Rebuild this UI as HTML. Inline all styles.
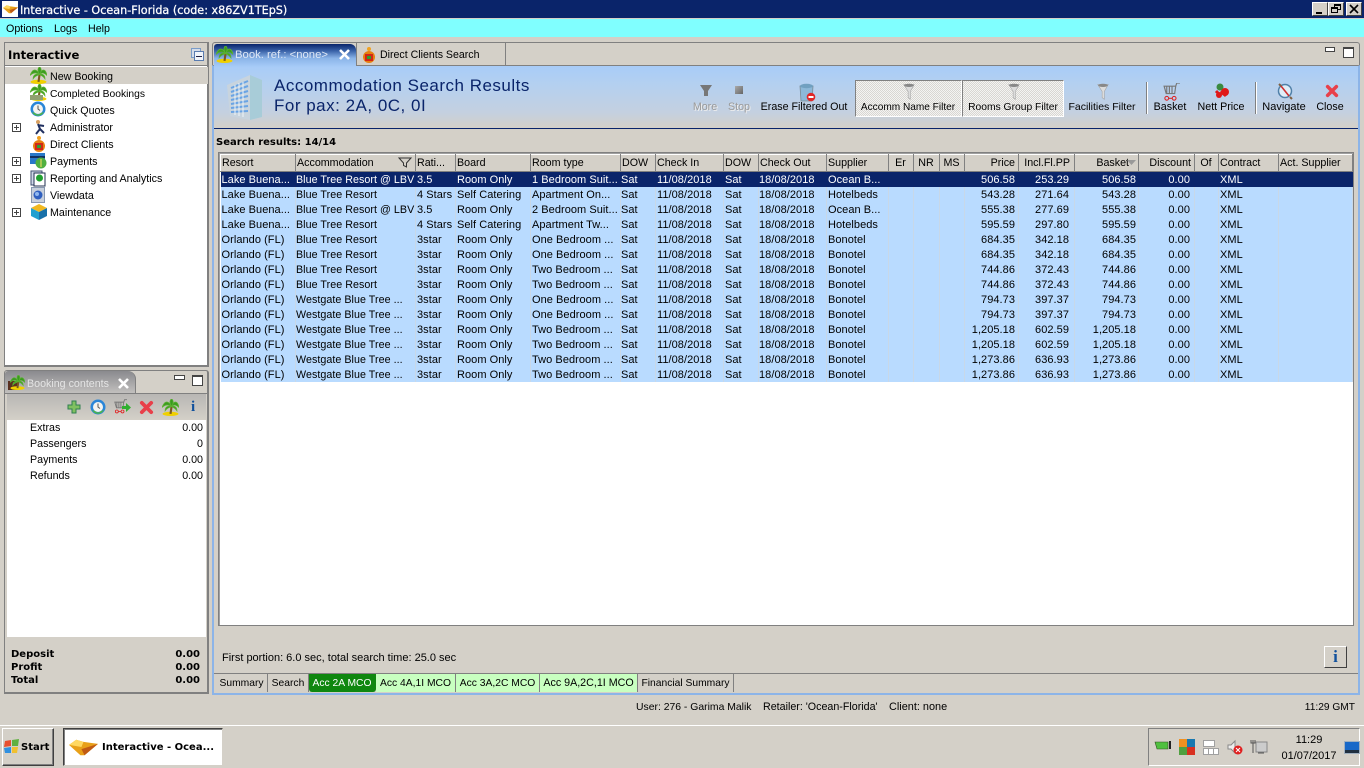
<!DOCTYPE html>
<html><head><meta charset="utf-8"><style>
*{box-sizing:border-box}
html,body{margin:0;padding:0;width:1364px;height:768px;overflow:hidden;background:#d4d0c8;font:10.7px/13px "Liberation Sans",sans-serif;color:#000}
.a{position:absolute}
.t{position:absolute;white-space:nowrap;margin-top:1px}
.c{transform:translateX(-50%)}
.b{font-family:"DejaVu Sans",sans-serif;font-weight:bold;font-size:10px}
svg{position:absolute;overflow:visible}
table{position:absolute;left:220px;top:154px;width:1132px;border-collapse:collapse;table-layout:fixed;font-size:11px}
th{height:17px;padding:1px 2px 0 1px;font-weight:normal;text-align:left;background:#d4d0c8;border:1px solid;border-color:#fff #808080 #808080 #fff;white-space:nowrap;overflow:hidden;font-size:10.7px}
td{height:15px;padding:2px 2px 0 1px;vertical-align:top;background:#b9dbff;border-right:1px solid #c8d8e8;white-space:nowrap;overflow:hidden;letter-spacing:.05px}
tr.s td{background:#0a246a;color:#fff;border-right-color:#0a246a}
td:nth-child(2),td:nth-child(6),td:nth-child(9){padding-left:0}
td:nth-child(2){padding-right:0;font-size:10.700px}
th:nth-child(n+14):nth-child(-n+17),td:nth-child(n+14):nth-child(-n+17){text-align:right}
td:nth-child(14){padding-right:3px}
td:nth-child(15){padding-right:5px}
td:nth-child(16){padding-right:2px}
td:nth-child(17){padding-right:4px}
th:nth-child(14),th:nth-child(17){padding-right:3px}
th:nth-child(15){padding-right:4px}
.tab{position:absolute;top:674px;height:18px;border-right:1px solid #808080;text-align:center;line-height:15px;padding-top:2px;white-space:nowrap;font-size:10.3px}
.g{background:#c8ffc0}
.sep{position:absolute;top:82px;width:2px;height:32px;border-left:1px solid #808080;border-right:1px solid #fff}
.pr{position:absolute;top:80px;height:37px;border:1px solid;border-color:#808080 #fff #fff #808080;background:repeating-conic-gradient(#d8d6d2 0 25%,#f4f4f2 0 50%) 0 0/2px 2px}
</style></head><body>
<svg width="0" height="0" style="position:absolute"><defs>
<symbol id="palm" viewBox="0 0 16 16"><ellipse cx="8" cy="14" rx="7.500" ry="2" fill="#f0d000"/><path d="M8 14 L9 7" stroke="#7a5a20" stroke-width="2"/><path d="M9 7 C5 0 2 3 0 8 C3 5 6 5 9 7 C5 6 3 8 3 11 C5 8 7 8 9 7 C7 4 7 1 9 0 C11 1 11 4 9 7 C12 0 15 3 16 8 C13 5 11 5 9 7 C12 6 14 8 14 11 C12 8 11 8 9 7" fill="#3a9a20" stroke="#5ab030" stroke-width=".8"/></symbol>
<symbol id="funnel" viewBox="0 0 16 20"><path d="M2 2 H14 L9.500 10 V19 L7 17 V10 Z" fill="#dcdcdc" stroke="#a0a0a0" stroke-width=".6"/><ellipse cx="8" cy="3" rx="5.500" ry="1.800" fill="#888"/></symbol>
<symbol id="x" viewBox="0 0 16 16"><path d="M3 3 L13 13 M13 3 L3 13" stroke="#e8404a" stroke-width="4" stroke-linecap="round"/></symbol>
<symbol id="cart" viewBox="0 0 16 18"><path d="M1 3 H12 L11 10 H3 Z M3.500 3 V10 M6 3 V10 M8.500 3 V10 M12 3 L13 0 H16" fill="none" stroke="#777" stroke-width="1.100"/><circle cx="3.500" cy="14.500" r="1.800" fill="none" stroke="#e02020"/><circle cx="10.500" cy="14.500" r="1.800" fill="none" stroke="#e02020"/><path d="M5 14.500 H9" stroke="#e02020"/></symbol>
<symbol id="clock" viewBox="0 0 16 16"><circle cx="8" cy="8" r="7.500" fill="#2a86d8"/><circle cx="8" cy="8" r="5" fill="#f4f4f0"/><path d="M8 4.500 V8 L10 9.500" stroke="#555" fill="none"/><path d="M2 11 C5 16 11 16 14 11 L11 12 C9 14 7 14 5 12 Z" fill="#50b840"/></symbol>
<symbol id="logo" viewBox="0 0 28 16"><path d="M0 6 L7 1 L14 3 L28 5 L15 16 L11 16 Z" fill="#e8a018"/><path d="M0 6 L7 1 L14 3 L12 8 Z" fill="#ffd860"/><path d="M28 5 L15 16 L12 10 Z" fill="#c05a14"/></symbol>
</defs></svg>

<!-- title bar -->
<div class="a" style="left:0;top:0;width:1364px;height:18px;background:#0a246a"></div>
<div class="a" style="left:2px;top:1px;width:16px;height:16px;background:#fff"></div>
<svg style="left:3px;top:4px" width="15" height="10"><use href="#logo" width="15" height="10"/></svg>
<div class="t b" style="left:20px;top:3px;color:#fff;font-size:11.200px;font-weight:normal;-webkit-text-stroke:.25px #fff">Interactive - Ocean-Florida (code: x86ZV1TEpS)</div>
<div class="a" style="left:1312px;top:2px;width:16px;height:14px;background:#d4d0c8;border:1px solid;border-color:#fff #404040 #404040 #fff"><div class="a" style="left:3px;top:9px;width:6px;height:2px;background:#000"></div></div>
<div class="a" style="left:1328px;top:2px;width:16px;height:14px;background:#d4d0c8;border:1px solid;border-color:#fff #404040 #404040 #fff"><div class="a" style="left:5px;top:1px;width:7px;height:6px;border:1px solid #000;border-top-width:2px"></div><div class="a" style="left:2px;top:4px;width:7px;height:6px;border:1px solid #000;border-top-width:2px;background:#d4d0c8"></div></div>
<div class="a" style="left:1346px;top:2px;width:16px;height:14px;background:#d4d0c8;border:1px solid;border-color:#fff #404040 #404040 #fff"><svg style="left:3px;top:2px" width="8" height="8"><path d="M0 0 L8 8 M8 0 L0 8" stroke="#000" stroke-width="1.600"/></svg></div>
<!-- menu -->
<div class="a" style="left:0;top:18px;width:1364px;height:1px;background:#d4d0c8"></div>
<div class="a" style="left:0;top:19px;width:1364px;height:18px;background:#80ffff"></div>
<div class="t" style="left:6px;top:22px">Options</div><div class="t" style="left:54px;top:22px">Logs</div><div class="t" style="left:88px;top:22px">Help</div>

<!-- left nav -->
<div class="a" style="left:4px;top:42px;width:205px;height:325px;border:1px solid #808080;border-width:1px 2px 2px 1px;background:#fff"></div>
<div class="a" style="left:5px;top:43px;width:202px;height:23px;background:#d4d0c8;border-bottom:1px solid #808080"></div>
<div class="t b" style="left:8px;top:47px;font-size:11.600px;line-height:14px">Interactive</div>
<div class="a" style="left:191px;top:48px;width:10px;height:10px;border:1px solid #7a9cc8;background:#d4dce8"></div>
<div class="a" style="left:194px;top:51px;width:10px;height:10px;border:1px solid #5a7cb0;background:#f0f4fa"><div class="a" style="left:1px;top:4px;width:6px;height:1px;background:#224"></div></div>
<div class="a" style="left:5px;top:67px;width:203px;height:17px;background:#d4d0c8"></div>
<svg style="left:30px;top:67px" width="17" height="17"><use href="#palm" width="17" height="17"/></svg>
<svg style="left:30px;top:84px" width="17" height="17"><use href="#palm" width="17" height="17"/><rect x="0" y="11" width="13" height="5" fill="#90a070"/></svg>
<svg style="left:30px;top:101px" width="16" height="16"><use href="#clock" width="16" height="16"/></svg>
<svg style="left:32px;top:119px" width="15" height="16"><circle cx="6" cy="3" r="2" fill="#d8a060"/><path d="M6 5 L8 10 L4 15 M8 10 L12 14 M6 6 L12 7" stroke="#203060" stroke-width="2" fill="none"/></svg>
<svg style="left:31px;top:135px" width="16" height="17"><circle cx="8" cy="11" r="6" fill="#e88010"/><rect x="4" y="8" width="8" height="7" fill="#d02818"/><rect x="6" y="10" width="4" height="3" fill="#30a030"/><circle cx="8" cy="3" r="2" fill="#f0a020"/></svg>
<svg style="left:30px;top:153px" width="17" height="17"><rect x="0" y="0" width="15" height="11" fill="#2878c8"/><rect x="0" y="3" width="15" height="2" fill="#103060"/><circle cx="11" cy="10" r="5.500" fill="#50b040"/><path d="M11 6 V14" stroke="#ffe060"/></svg>
<svg style="left:31px;top:170px" width="15" height="17"><rect x="0" y="1" width="11" height="14" fill="#d0d8e8" stroke="#405070"/><rect x="3" y="3" width="11" height="13" fill="#fff" stroke="#203050"/><circle cx="8.500" cy="8" r="3.500" fill="#20a030"/></svg>
<svg style="left:31px;top:187px" width="14" height="16"><rect x=".5" y=".5" width="13" height="15" fill="#c8d0dc" stroke="#8898b0"/><circle cx="7" cy="8" r="4.500" fill="#3060c0"/><circle cx="6" cy="7" r="2" fill="#90b8f0"/></svg>
<svg style="left:31px;top:204px" width="16" height="16"><path d="M0 4 L8 0 L16 4 L8 8 Z" fill="#f0b820"/><path d="M0 4 L8 8 V16 L0 12 Z" fill="#20a0d0"/><path d="M16 4 L8 8 V16 L16 12 Z" fill="#1870a8"/></svg>
<div class="t" style="left:50px;top:70px">New Booking</div>
<div class="t" style="left:50px;top:87px;font-size:10.300px">Completed Bookings</div>
<div class="t" style="left:50px;top:104px">Quick Quotes</div>
<div class="t" style="left:50px;top:121px">Administrator</div>
<div class="t" style="left:50px;top:138px">Direct Clients</div>
<div class="t" style="left:50px;top:155px">Payments</div>
<div class="t" style="left:50px;top:172px">Reporting and Analytics</div>
<div class="t" style="left:50px;top:189px">Viewdata</div>
<div class="t" style="left:50px;top:206px">Maintenance</div>
<svg style="left:12px;top:123px" width="9" height="9"><path d="M.5 .5H8.500V8.500H.5Z M2 4.500H7 M4.500 2V7" fill="#fff" stroke="#444"/></svg>
<svg style="left:12px;top:157px" width="9" height="9"><path d="M.5 .5H8.500V8.500H.5Z M2 4.500H7 M4.500 2V7" fill="#fff" stroke="#444"/></svg>
<svg style="left:12px;top:174px" width="9" height="9"><path d="M.5 .5H8.500V8.500H.5Z M2 4.500H7 M4.500 2V7" fill="#fff" stroke="#444"/></svg>
<svg style="left:12px;top:208px" width="9" height="9"><path d="M.5 .5H8.500V8.500H.5Z M2 4.500H7 M4.500 2V7" fill="#fff" stroke="#444"/></svg>

<!-- booking contents -->
<div class="a" style="left:4px;top:370px;width:205px;height:324px;border:1px solid #808080;border-right-width:2px;border-bottom-width:2px;border-radius:3px 3px 0 0;background:#d4d0c8"></div>
<div class="a" style="left:5px;top:371px;width:131px;height:23px;background:linear-gradient(#8a8a8e,#c4c2c0);border-right:1px solid #808080;border-radius:3px 8px 0 0"></div>
<div class="a" style="left:5px;top:393px;width:202px;height:1px;background:#808080"></div>
<div class="a" style="left:7px;top:394px;width:199px;height:26px;background:linear-gradient(#b8b6b4,#d4d0c8)"></div>
<svg style="left:8px;top:375px" width="18" height="16"><rect x="0" y="6" width="10" height="9" fill="#5a3020"/><use href="#palm" x="2" width="15" height="15"/></svg>
<div class="t" style="left:27px;top:377px;color:#e4e4e4;font-size:10.700px">Booking contents</div>
<svg style="left:118px;top:378px" width="11" height="11"><path d="M1 1 L10 10 M10 1 L1 10" stroke="#fff" stroke-width="2.600"/></svg>
<div class="a" style="left:174px;top:375px;width:11px;height:5px;border:1px solid #444;background:#fff"></div>
<div class="a" style="left:192px;top:375px;width:11px;height:11px;border:1px solid #444;border-top-width:2px;background:#fff"></div>
<svg style="left:67px;top:400px" width="14" height="14"><path d="M5 1H9V5H13V9H9V13H5V9H1V5H5Z" fill="#80c060" stroke="#308050"/></svg>
<svg style="left:90px;top:399px" width="16" height="16"><use href="#clock" width="16" height="16"/></svg>
<svg style="left:114px;top:399px" width="17" height="16"><use href="#cart" width="13" height="16"/><path d="M8 7H12V4L17 8.500L12 13V10H8Z" fill="#30b030"/></svg>
<svg style="left:139px;top:400px" width="15" height="15"><use href="#x" width="15" height="15"/></svg>
<svg style="left:162px;top:399px" width="17" height="17"><use href="#palm" width="17" height="17"/></svg>
<div class="t" style="left:191px;top:399px;color:#10509c;font:bold 15px/15px 'Liberation Serif',serif">i</div>
<div class="a" style="left:7px;top:420px;width:199px;height:217px;background:#fff"></div>
<div class="t" style="left:30px;top:421px">Extras</div><div class="t" style="right:1161px;top:421px">0.00</div>
<div class="t" style="left:30px;top:437px">Passengers</div><div class="t" style="right:1161px;top:437px">0</div>
<div class="t" style="left:30px;top:453px">Payments</div><div class="t" style="right:1161px;top:453px">0.00</div>
<div class="t" style="left:30px;top:469px">Refunds</div><div class="t" style="right:1161px;top:469px">0.00</div>
<div class="t b" style="left:11px;top:647px">Deposit</div><div class="t b" style="right:1164px;top:647px">0.00</div>
<div class="t b" style="left:11px;top:660px">Profit</div><div class="t b" style="right:1164px;top:660px">0.00</div>
<div class="t b" style="left:11px;top:673px">Total</div><div class="t b" style="right:1164px;top:673px">0.00</div>

<!-- main panel -->
<div class="a" style="left:212px;top:42px;width:1148px;height:23px;border:1px solid #808080;border-bottom:0;border-radius:3px 3px 0 0"></div>
<div class="a" style="left:212px;top:65px;width:1148px;height:630px;border:2px solid #8cb4e8;border-top:1px solid #808080"></div>
<div class="a" style="left:214px;top:66px;width:1144px;height:62px;background:linear-gradient(#a8ccf8 0%,#b4d0f0 30%,#c4d0e0 75%,#d4d0c8 100%)"></div>
<div class="a" style="left:214px;top:128px;width:1144px;height:1px;background:#0a246a"></div>
<div class="a" style="left:214px;top:44px;width:142px;height:23px;background:linear-gradient(#0a246a 0%,#3a62a8 30%,#8ab4e8 62%,#a8ccf8 100%);border-radius:3px 6px 0 0"></div>
<div class="a" style="left:356px;top:43px;width:150px;height:23px;border-left:1px solid #808080;border-right:1px solid #808080;border-bottom:1px solid #808080"></div>
<svg style="left:216px;top:46px" width="17" height="17"><use href="#palm" width="17" height="17"/></svg>
<div class="t" style="left:235px;top:48px;color:#dfe8f6;font-size:11.300px">Book. ref.: &lt;none&gt;</div>
<svg style="left:339px;top:49px" width="11" height="11"><path d="M1 1 L10 10 M10 1 L1 10" stroke="#fff" stroke-width="2.600"/></svg>
<svg style="left:361px;top:46px" width="16" height="17"><circle cx="8" cy="11" r="6" fill="#e88010"/><rect x="4" y="8" width="8" height="7" fill="#d02818"/><rect x="6" y="10" width="4" height="3" fill="#30a030"/><circle cx="8" cy="3" r="2" fill="#f0a020"/></svg>
<div class="t" style="left:380px;top:48px;font-size:10.600px">Direct Clients Search</div>
<div class="a" style="left:1325px;top:47px;width:10px;height:5px;border:1px solid #444;background:#fff"></div>
<div class="a" style="left:1343px;top:47px;width:11px;height:11px;border:1px solid #444;border-top-width:2px;background:#fff"></div>

<!-- building -->
<svg style="left:226px;top:73px" width="37" height="48"><path d="M1 12 L24 2 V47 L4 43 Z" fill="#c8d4de"/><path d="M24 2 L36 7 V44 L24 47 Z" fill="#a8ccd8"/><path d="M5 15 L22 8 M5 19 L22 13 M5 23 L22 18 M5 27 L22 23 M5 31 L22 28 M5 35 L22 33 M5 39 L22 38" stroke="#6aa4e4" stroke-width="2"/><path d="M9 12 V42 M13 10 V43 M17 9 V44" stroke="#eef4f8" stroke-width="1"/></svg>
<div class="t" style="left:274px;top:76px;margin-top:0;font-size:17px;line-height:19px;color:#0a246a;letter-spacing:.5px">Accommodation Search Results</div>
<div class="t" style="left:274px;top:96px;margin-top:0;font-size:17px;line-height:19px;color:#0a246a;letter-spacing:.5px">For pax: 2A, 0C, 0I</div>

<!-- toolbar -->
<div class="pr" style="left:855px;width:107px"></div>
<div class="pr" style="left:962px;width:102px"></div>
<svg style="left:700px;top:85px" width="12" height="11"><path d="M0 0H12L8 6V11H4V6Z" fill="#777"/></svg>
<div class="a" style="left:735px;top:86px;width:8px;height:8px;background:linear-gradient(135deg,#aaa,#666)"></div>
<svg style="left:799px;top:83px" width="17" height="20"><path d="M1 3 H14 L13 18 H2 Z" fill="#8cb8d8" stroke="#7a8a94" stroke-width=".8"/><ellipse cx="7.500" cy="3" rx="6.500" ry="2.200" fill="#70a0c0"/><circle cx="12" cy="14" r="4.300" fill="#e02828"/><rect x="9.500" y="13" width="5" height="2" fill="#fff"/></svg>
<svg style="left:902px;top:82px" width="14" height="19"><use href="#funnel" width="14" height="19"/></svg>
<svg style="left:1007px;top:82px" width="14" height="19"><use href="#funnel" width="14" height="19"/></svg>
<svg style="left:1096px;top:82px" width="14" height="19"><use href="#funnel" width="14" height="19"/></svg>
<svg style="left:1163px;top:83px" width="17" height="19"><use href="#cart" width="17" height="19"/></svg>
<svg style="left:1214px;top:83px" width="16" height="16"><circle cx="6" cy="4" r="3.500" fill="#3a8a40"/><path d="M2 8 L7 13 M7 8 L12 13" stroke="#e01818" stroke-width="3"/><circle cx="11" cy="9" r="4" fill="#e01818"/><circle cx="5" cy="12" r="3" fill="#e01818"/></svg>
<svg style="left:1277px;top:83px" width="16" height="17"><circle cx="8" cy="8" r="6.500" fill="#e0eef8" stroke="#5080a8" stroke-width="1.500"/><path d="M4 3 L12 13" stroke="#d03030" stroke-width="1.600"/><path d="M2 1L4 3M13 14L15 16" stroke="#806040" stroke-width="2"/></svg>
<svg style="left:1325px;top:84px" width="14" height="14"><use href="#x" width="14" height="14"/></svg>
<div class="sep" style="left:1146px"></div><div class="sep" style="left:1255px"></div>
<div class="t c" style="left:705px;top:100px;color:#9a9a9a;text-shadow:1px 1px 0 #eee">More</div>
<div class="t c" style="left:739px;top:100px;color:#9a9a9a;text-shadow:1px 1px 0 #eee">Stop</div>
<div class="t c" style="left:804px;top:100px;font-size:10.700px">Erase Filtered Out</div>
<div class="t c" style="left:908px;top:100px;font-size:10.100px">Accomm Name Filter</div>
<div class="t c" style="left:1013px;top:100px;font-size:10.300px">Rooms Group Filter</div>
<div class="t c" style="left:1102px;top:100px;font-size:10.500px">Facilities Filter</div>
<div class="t c" style="left:1170px;top:100px">Basket</div>
<div class="t c" style="left:1221px;top:100px">Nett Price</div>
<div class="t c" style="left:1284px;top:100px;font-size:11px">Navigate</div>
<div class="t c" style="left:1330px;top:100px">Close</div>

<div class="t b" style="left:216px;top:135px">Search results: 14/14</div>

<!-- grid -->
<div class="a" style="left:218px;top:152px;width:1136px;height:474px;background:#fff;border:1px solid #808080;box-shadow:inset 1px 1px 0 #a0a0a0"></div>
<table>
<colgroup><col style="width:75px"><col style="width:120px"><col style="width:40px"><col style="width:75px"><col style="width:90px"><col style="width:35px"><col style="width:68px"><col style="width:35px"><col style="width:68px"><col style="width:62px"><col style="width:25px"><col style="width:26px"><col style="width:25px"><col style="width:54px"><col style="width:56px"><col style="width:64px"><col style="width:56px"><col style="width:24px"><col style="width:60px"><col style="width:74px"></colgroup>
<tr><th>Resort</th><th>Accommodation</th><th>Rati...</th><th>Board</th><th>Room type</th><th>DOW</th><th>Check In</th><th>DOW</th><th>Check Out</th><th>Supplier</th><th style="text-align:center">Er</th><th style="text-align:center">NR</th><th style="text-align:center">MS</th><th>Price</th><th>Incl.Fl.PP</th><th style="padding-right:9px">Basket</th><th>Discount</th><th style="text-align:center">Of</th><th>Contract</th><th>Act. Supplier</th></tr>
<tr class="s"><td>Lake Buena...</td><td>Blue Tree Resort @ LBV</td><td>3.5</td><td>Room Only</td><td>1 Bedroom Suit...</td><td>Sat</td><td>11/08/2018</td><td>Sat</td><td>18/08/2018</td><td>Ocean B...</td><td></td><td></td><td></td><td>506.58</td><td>253.29</td><td>506.58</td><td>0.00</td><td></td><td>XML</td><td></td></tr>
<tr><td>Lake Buena...</td><td>Blue Tree Resort</td><td>4 Stars</td><td>Self Catering</td><td>Apartment On...</td><td>Sat</td><td>11/08/2018</td><td>Sat</td><td>18/08/2018</td><td>Hotelbeds</td><td></td><td></td><td></td><td>543.28</td><td>271.64</td><td>543.28</td><td>0.00</td><td></td><td>XML</td><td></td></tr>
<tr><td>Lake Buena...</td><td>Blue Tree Resort @ LBV</td><td>3.5</td><td>Room Only</td><td>2 Bedroom Suit...</td><td>Sat</td><td>11/08/2018</td><td>Sat</td><td>18/08/2018</td><td>Ocean B...</td><td></td><td></td><td></td><td>555.38</td><td>277.69</td><td>555.38</td><td>0.00</td><td></td><td>XML</td><td></td></tr>
<tr><td>Lake Buena...</td><td>Blue Tree Resort</td><td>4 Stars</td><td>Self Catering</td><td>Apartment Tw...</td><td>Sat</td><td>11/08/2018</td><td>Sat</td><td>18/08/2018</td><td>Hotelbeds</td><td></td><td></td><td></td><td>595.59</td><td>297.80</td><td>595.59</td><td>0.00</td><td></td><td>XML</td><td></td></tr>
<tr><td>Orlando (FL)</td><td>Blue Tree Resort</td><td>3star</td><td>Room Only</td><td>One Bedroom ...</td><td>Sat</td><td>11/08/2018</td><td>Sat</td><td>18/08/2018</td><td>Bonotel</td><td></td><td></td><td></td><td>684.35</td><td>342.18</td><td>684.35</td><td>0.00</td><td></td><td>XML</td><td></td></tr>
<tr><td>Orlando (FL)</td><td>Blue Tree Resort</td><td>3star</td><td>Room Only</td><td>One Bedroom ...</td><td>Sat</td><td>11/08/2018</td><td>Sat</td><td>18/08/2018</td><td>Bonotel</td><td></td><td></td><td></td><td>684.35</td><td>342.18</td><td>684.35</td><td>0.00</td><td></td><td>XML</td><td></td></tr>
<tr><td>Orlando (FL)</td><td>Blue Tree Resort</td><td>3star</td><td>Room Only</td><td>Two Bedroom ...</td><td>Sat</td><td>11/08/2018</td><td>Sat</td><td>18/08/2018</td><td>Bonotel</td><td></td><td></td><td></td><td>744.86</td><td>372.43</td><td>744.86</td><td>0.00</td><td></td><td>XML</td><td></td></tr>
<tr><td>Orlando (FL)</td><td>Blue Tree Resort</td><td>3star</td><td>Room Only</td><td>Two Bedroom ...</td><td>Sat</td><td>11/08/2018</td><td>Sat</td><td>18/08/2018</td><td>Bonotel</td><td></td><td></td><td></td><td>744.86</td><td>372.43</td><td>744.86</td><td>0.00</td><td></td><td>XML</td><td></td></tr>
<tr><td>Orlando (FL)</td><td>Westgate Blue Tree ...</td><td>3star</td><td>Room Only</td><td>One Bedroom ...</td><td>Sat</td><td>11/08/2018</td><td>Sat</td><td>18/08/2018</td><td>Bonotel</td><td></td><td></td><td></td><td>794.73</td><td>397.37</td><td>794.73</td><td>0.00</td><td></td><td>XML</td><td></td></tr>
<tr><td>Orlando (FL)</td><td>Westgate Blue Tree ...</td><td>3star</td><td>Room Only</td><td>One Bedroom ...</td><td>Sat</td><td>11/08/2018</td><td>Sat</td><td>18/08/2018</td><td>Bonotel</td><td></td><td></td><td></td><td>794.73</td><td>397.37</td><td>794.73</td><td>0.00</td><td></td><td>XML</td><td></td></tr>
<tr><td>Orlando (FL)</td><td>Westgate Blue Tree ...</td><td>3star</td><td>Room Only</td><td>Two Bedroom ...</td><td>Sat</td><td>11/08/2018</td><td>Sat</td><td>18/08/2018</td><td>Bonotel</td><td></td><td></td><td></td><td>1,205.18</td><td>602.59</td><td>1,205.18</td><td>0.00</td><td></td><td>XML</td><td></td></tr>
<tr><td>Orlando (FL)</td><td>Westgate Blue Tree ...</td><td>3star</td><td>Room Only</td><td>Two Bedroom ...</td><td>Sat</td><td>11/08/2018</td><td>Sat</td><td>18/08/2018</td><td>Bonotel</td><td></td><td></td><td></td><td>1,205.18</td><td>602.59</td><td>1,205.18</td><td>0.00</td><td></td><td>XML</td><td></td></tr>
<tr><td>Orlando (FL)</td><td>Westgate Blue Tree ...</td><td>3star</td><td>Room Only</td><td>Two Bedroom ...</td><td>Sat</td><td>11/08/2018</td><td>Sat</td><td>18/08/2018</td><td>Bonotel</td><td></td><td></td><td></td><td>1,273.86</td><td>636.93</td><td>1,273.86</td><td>0.00</td><td></td><td>XML</td><td></td></tr>
<tr><td>Orlando (FL)</td><td>Westgate Blue Tree ...</td><td>3star</td><td>Room Only</td><td>Two Bedroom ...</td><td>Sat</td><td>11/08/2018</td><td>Sat</td><td>18/08/2018</td><td>Bonotel</td><td></td><td></td><td></td><td>1,273.86</td><td>636.93</td><td>1,273.86</td><td>0.00</td><td></td><td>XML</td><td></td></tr>
</table>
<svg style="left:398px;top:157px" width="14" height="11"><path d="M1 1H13L8.500 6V10L5.500 8.500V6Z" fill="none" stroke="#333"/></svg>
<svg style="left:1127px;top:160px" width="9" height="5"><path d="M0 0H9L4.500 5Z" fill="#999"/></svg>

<div class="t" style="left:222px;top:651px;font-size:11px">First portion: 6.0 sec, total search time: 25.0 sec</div>
<div class="a" style="left:1324px;top:646px;width:23px;height:22px;border:1px solid;border-color:#fff #404040 #404040 #fff;text-align:center;color:#10509c;font:bold 17px/20px 'Liberation Serif',serif">i</div>

<!-- bottom tabs -->
<div class="a" style="left:214px;top:673px;width:1144px;height:1px;background:#808080"></div>
<div class="tab" style="left:216px;width:52px">Summary</div>
<div class="tab" style="left:268px;width:41px">Search</div>
<div class="tab" style="left:309px;width:67px;background:#0f870f;color:#fff;border-color:#0f870f;border-radius:0 0 3px 3px">Acc 2A MCO</div>
<div class="tab g" style="left:376px;width:80px">Acc 4A,1I MCO</div>
<div class="tab g" style="left:456px;width:84px">Acc 3A,2C MCO</div>
<div class="tab g" style="left:540px;width:98px;font-size:10.700px">Acc 9A,2C,1I MCO</div>
<div class="tab" style="left:638px;width:96px">Financial Summary</div>

<!-- status -->
<div class="t" style="left:636px;top:700px;font-size:10.400px">User: 276 - Garima Malik</div>
<div class="t" style="left:763px;top:700px">Retailer: 'Ocean-Florida'</div>
<div class="t" style="left:889px;top:700px;font-size:10.900px">Client: none</div>
<div class="t" style="right:9px;top:700px;font-size:10.200px">11:29 GMT</div>

<!-- taskbar -->
<div class="a" style="left:0;top:725px;width:1364px;height:1px;background:#fff"></div>
<div class="a" style="left:2px;top:728px;width:52px;height:38px;border:1px solid;border-color:#fff #404040 #404040 #fff;box-shadow:inset -1px -1px 0 #808080"></div>
<svg style="left:4px;top:739px" width="16" height="15"><path d="M1 2 L7 1 V7 L0 8Z" fill="#e85030"/><path d="M8 1 L15 0 L14 7 H8Z" fill="#60b040"/><path d="M0 9 L7 8 V14 L1 14Z" fill="#3090e0"/><path d="M8 8 H14 L13 14 L8 14Z" fill="#f0c030"/></svg>
<div class="t b" style="left:21px;top:741px;margin-top:0">Start</div>
<div class="a" style="left:63px;top:728px;width:160px;height:38px;background:#fff;border:1px solid;border-color:#404040 #d4d0c8 #d4d0c8 #404040;box-shadow:inset 1px 1px 0 #808080"></div>
<svg style="left:69px;top:737px" width="29" height="20"><use href="#logo" width="29" height="20"/></svg>
<div class="t b" style="left:102px;top:741px;margin-top:0">Interactive - Ocea...</div>
<div class="a" style="left:1148px;top:728px;width:212px;height:38px;border:1px solid;border-color:#808080 #fff #fff #808080"></div>
<svg style="left:1155px;top:741px" width="16" height="11"><path d="M0 1H13V8H2Z" fill="#50c040" stroke="#305020" stroke-width=".6"/><path d="M14 0H16V8H14" fill="#222"/></svg>
<svg style="left:1179px;top:739px" width="16" height="16"><rect width="8" height="8" fill="#f09020"/><rect x="8" width="8" height="8" fill="#1878b0"/><rect y="8" width="8" height="8" fill="#50a040"/><rect x="8" y="8" width="8" height="8" fill="#d83020"/></svg>
<svg style="left:1203px;top:740px" width="16" height="15"><path d="M.5 .5H11.500V6.500H.5Z M.5 8.500H15.500V14.500H.5Z M5.500 8.500V14.500M10.500 8.500V14.500" fill="#fff" stroke="#a0a0a0"/></svg>
<svg style="left:1227px;top:740px" width="16" height="16"><path d="M1 5H4L8 1V13L4 9H1Z" fill="#eee" stroke="#888"/><circle cx="11" cy="10" r="4.500" fill="#e02020"/><path d="M9 8L13 12M13 8L9 12" stroke="#fff"/></svg>
<svg style="left:1251px;top:739px" width="17" height="16"><rect x="5" y="3" width="11" height="10" fill="#ccc" stroke="#888"/><path d="M2 1V14M0 1V4H4V1M7 14H13" stroke="#555" fill="none"/></svg>
<div class="t c" style="left:1309px;top:733px;font-size:11px">11:29</div>
<div class="t c" style="left:1309px;top:749px;font-size:11px">01/07/2017</div>
<svg style="left:1344px;top:741px" width="16" height="13"><rect x=".5" y=".5" width="15" height="12" fill="#1868c8" stroke="#a0b0c0"/><rect x="1" y="9" width="14" height="3" fill="#203040"/></svg>
</body></html>
